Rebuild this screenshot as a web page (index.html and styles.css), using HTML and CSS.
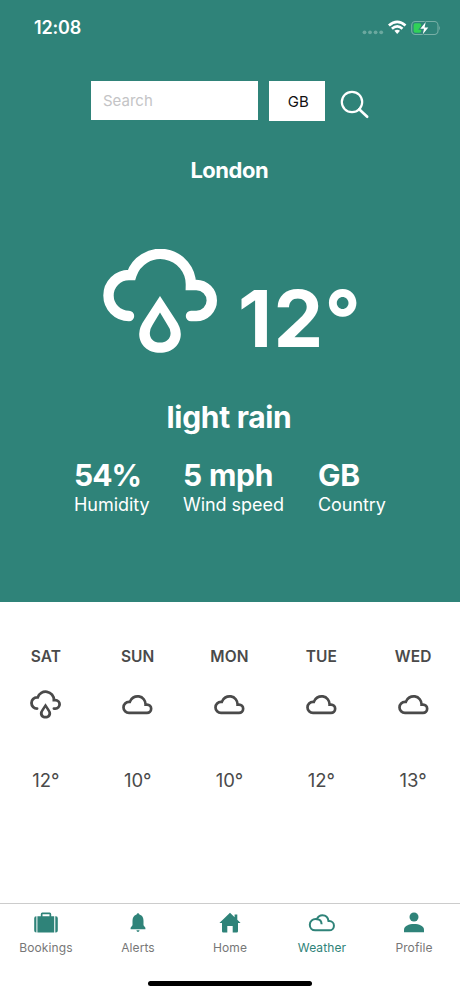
FILE: index.html
```html
<!DOCTYPE html>
<html lang="en">
<head>
<meta charset="utf-8">
<title>Weather</title>
<link rel="stylesheet" href="styles.css">
</head>
<body>
<svg class="defs" aria-hidden="true">
  <symbol id="rain" viewBox="103 249 114 104">
    <path d="M129 316A20.5 20.5 0 0 1 129 275H131.4A30.5 30.5 0 0 1 190.9 285H196.3A15.5 15.5 0 0 1 196.3 316H191" fill="none" stroke="currentColor" stroke-width="10.4" stroke-linecap="round"/>
    <path fill="currentColor" fill-rule="evenodd" d="M160 296L175 319Q180.8 327 180.8 334C180.8 345 172 352.8 160 352.8S139.2 345 139.2 334Q139.2 327 145 319ZM160 312.5L152.5 325Q149.8 329 149.8 333C149.8 339 154 342.6 160 342.6S170.6 339 170.6 333Q170.6 329 167.5 325Z"/>
  </symbol>
  <symbol id="cloud" viewBox="0 0 31 21">
    <path d="M7 18.9A5.5 5.5 0 0 1 7 7.9H7.8A8.1 8.1 0 0 1 23.6 10.6H25A4.15 4.15 0 0 1 25 18.9Z" fill="none" stroke="currentColor" stroke-width="2.7"/>
  </symbol>
</svg>
<main class="screen">
  <section class="current">
    <header class="status">
      <span class="time">12:08</span>
      <svg class="indicators" width="80" height="20" viewBox="0 0 80 20">
        <g fill="#6ba89f"><circle cx="4.5" cy="14.3" r="1.9"/><circle cx="10" cy="14.3" r="1.9"/><circle cx="15.6" cy="14.3" r="1.9"/><circle cx="21.2" cy="14.3" r="1.9"/></g>
        <g fill="none" stroke="#fff" stroke-width="2.7"><path d="M28.9 7.5Q37.2 .1 45.5 7.5"/><path d="M31.9 10.8Q37.2 6 42.5 10.8"/></g>
        <path fill="#fff" d="M34.4 12.8Q37.2 10.8 40 12.8L37.2 15.9Z"/>
        <rect x="51.7" y="3.5" width="26.3" height="13" rx="3.7" fill="none" stroke="#78afa6" stroke-width="1.1"/>
        <path d="M79 7.7V12.3Q80.6 10 79 7.7" fill="#78afa6"/>
        <rect x="53.6" y="5.3" width="7.6" height="9.4" rx="1.7" fill="#30d158"/>
        <path d="M65.7 4L60.3 10.7H64L62.8 16.2L68.3 9.4H64.6Z" fill="#fff" stroke="#2f8379" stroke-width="2" paint-order="stroke"/>
      </svg>
    </header>
    <form class="search">
      <input class="query" type="text" placeholder="Search">
      <div class="country">GB</div>
      <svg class="lens" width="30" height="30" viewBox="0 0 30 30" fill="none" stroke="#fff" stroke-width="2.2"><circle cx="12" cy="12" r="10.2"/><path d="M19.2 19.2L27.2 26.8" stroke-width="2.6" stroke-linecap="round"/></svg>
    </form>
    <h1 class="city">London</h1>
    <div class="now">
      <svg class="now-icon" width="114" height="104"><use href="#rain"/></svg>
      <span class="temp">12°</span>
    </div>
    <h2 class="summary">light rain</h2>
    <div class="facts">
      <div class="fact humidity"><b>54%</b><span>Humidity</span></div>
      <div class="fact wind"><b>5 mph</b><span>Wind speed</span></div>
      <div class="fact nation"><b>GB</b><span>Country</span></div>
    </div>
  </section>
  <section class="forecast">
    <div class="day"><b>SAT</b><svg width="31" height="29"><use href="#rain"/></svg><span>12°</span></div>
    <div class="day"><b>SUN</b><svg width="31" height="21"><use href="#cloud"/></svg><span>10°</span></div>
    <div class="day"><b>MON</b><svg width="31" height="21"><use href="#cloud"/></svg><span>10°</span></div>
    <div class="day"><b>TUE</b><svg width="31" height="21"><use href="#cloud"/></svg><span>12°</span></div>
    <div class="day"><b>WED</b><svg width="31" height="21"><use href="#cloud"/></svg><span>13°</span></div>
  </section>
  <nav class="tabs">
    <div class="tab"><svg width="28" height="24" viewBox="0 0 28 24" fill="currentColor"><path d="M5.4 5.2H8.8V3.2Q8.8 1.5 10.3 1.5H17.7Q19.2 1.5 19.2 3.2V5.2H22.2V21.4H5.4ZM10.5 5.2H17.5V3.2H10.5Z" fill-rule="evenodd"/><path d="M4.4 5.2V21.4H4.2Q2.2 21.4 2.2 19.4V7.2Q2.2 5.2 4.2 5.2ZM23.3 5.2V21.4H23.9Q25.8 21.4 25.8 19.4V7.2Q25.8 5.2 23.9 5.2Z"/></svg><span>Bookings</span></div>
    <div class="tab"><svg width="28" height="24" viewBox="0 0 28 24" fill="currentColor"><path d="M14 2.2Q15.2 2.2 15.4 3.6C18.5 4.4 19.5 7 19.5 10V14.2L21.4 16.8V18.2H6.6V16.8L8.5 14.2V10C8.5 7 9.5 4.4 12.6 3.6Q12.8 2.2 14 2.2ZM12.4 19.3H15.6Q15.3 21 14 21T12.4 19.3"/></svg><span>Alerts</span></div>
    <div class="tab"><svg width="28" height="24" viewBox="0 0 28 24" fill="currentColor"><path d="M14 1.8L18.6 6.2V3.6H21.3V8.8L24.6 12H22V20.2Q22 21.5 20.7 21.5H16.7V15H11.3V21.5H7.3Q6 21.5 6 20.2V12H3.4Z"/></svg><span>Home</span></div>
    <div class="tab active"><svg width="28" height="24" viewBox="0 0 28 24" fill="none" stroke="currentColor" stroke-width="2"><path d="M7.2 19.3H21.3A4.65 4.65 0 0 0 21.3 10H20.5C20 6.3 17.5 4.2 14.5 4.2C11.8 4.2 9.9 5.7 8.9 8.2C4.5 7.6 1.8 10.2 1.8 13.8C1.8 17 4 19.3 7.2 19.3ZM8.9 8.2C11.8 8.3 13.5 10.3 13.6 13.2"/></svg><span>Weather</span></div>
    <div class="tab"><svg width="28" height="24" viewBox="0 0 28 24" fill="currentColor"><circle cx="14" cy="6" r="4.5"/><path d="M4 21.3V18.7C4 14.8 9 13 14 13S24 14.8 24 18.7V21.3Z"/></svg><span>Profile</span></div>
  </nav>
  <footer class="home"><div class="bar"></div></footer>
</main>
</body>
</html>
```
FILE: styles.css
```css
* { box-sizing: border-box; }
body { margin: 0; background: #fff; font-family: Inter, "Liberation Sans", sans-serif; color: #4a4a4a; }
svg { display: block; flex: none; }
.defs { position: absolute; width: 0; height: 0; }
.screen { width: 460px; height: 996px; display: flex; flex-direction: column; overflow: hidden; }

.current { height: 602px; background: #2f8379; color: #fff; display: flex; flex-direction: column; flex: none; }
.status { height: 56px; padding: 18px 20px 0 34px; display: flex; justify-content: space-between; }
.time { font-size: 18px; line-height: 20px; font-weight: 600; letter-spacing: -0.2px; }
.search { margin: 25px 0 0 91px; display: flex; height: 40px; }
.query { width: 167px; height: 39px; border: 0; border-radius: 0; padding: 0 12px; background: #fff; font: 15px Inter, sans-serif; }
.query::placeholder { color: #c4c4c6; }
.country { width: 55.5px; height: 40px; margin-left: 11px; padding-left: 3px; background: #fff; color: #111; font-size: 15px; line-height: 42px; text-align: center; }
.lens { margin: 9px 0 0 15px; }
.city { margin: 35px 0 0; font-size: 22px; line-height: 28px; font-weight: 700; text-align: center; letter-spacing: -0.5px; text-indent: -1.5px; }
.now { display: flex; margin: 65px 0 0 103px; height: 104px; }
.temp { margin: 22px 0 0 21px; font-size: 79px; line-height: 95px; font-weight: 700; letter-spacing: 1.4px; }
.summary { margin: 46px 0 0; font-size: 30px; line-height: 36px; font-weight: 700; text-align: center; letter-spacing: -0.3px; text-indent: -2px; }
.facts { display: flex; margin: 22px 0 0 74px; }
.fact { display: flex; flex-direction: column; white-space: nowrap; }
.fact b { font-size: 30px; line-height: 36px; font-weight: 700; letter-spacing: -1px; }
.wind b, .nation b { letter-spacing: -0.2px; }
.fact span { font-size: 18px; line-height: 23px; letter-spacing: -0.05px; }
.humidity { width: 109px; }
.wind { width: 135px; }

.forecast { flex: 1; display: flex; padding-top: 43px; }
.day { width: 91.8px; height: 150px; flex: none; display: grid; grid-template-rows: 22px 75px 50px; justify-items: center; align-items: center; }
.day b { font-size: 15.5px; font-weight: 600; letter-spacing: 0.1px; }
.day span { font-size: 18.5px; align-self: end; line-height: 24px; }

.tabs { height: 60px; border-top: 1px solid #ccc; display: flex; }
.tab { width: 92px; display: flex; flex-direction: column; align-items: center; padding-top: 7px; color: #2f8379; }
.tab span { margin-top: 5px; font-size: 12px; line-height: 16px; color: #777; letter-spacing: 0.1px; }
.tab.active span { color: #2f8379; }
.home { height: 33px; display: flex; justify-content: center; padding-top: 18px; }
.bar { width: 164px; height: 5px; border-radius: 3px; background: #000; }
```
